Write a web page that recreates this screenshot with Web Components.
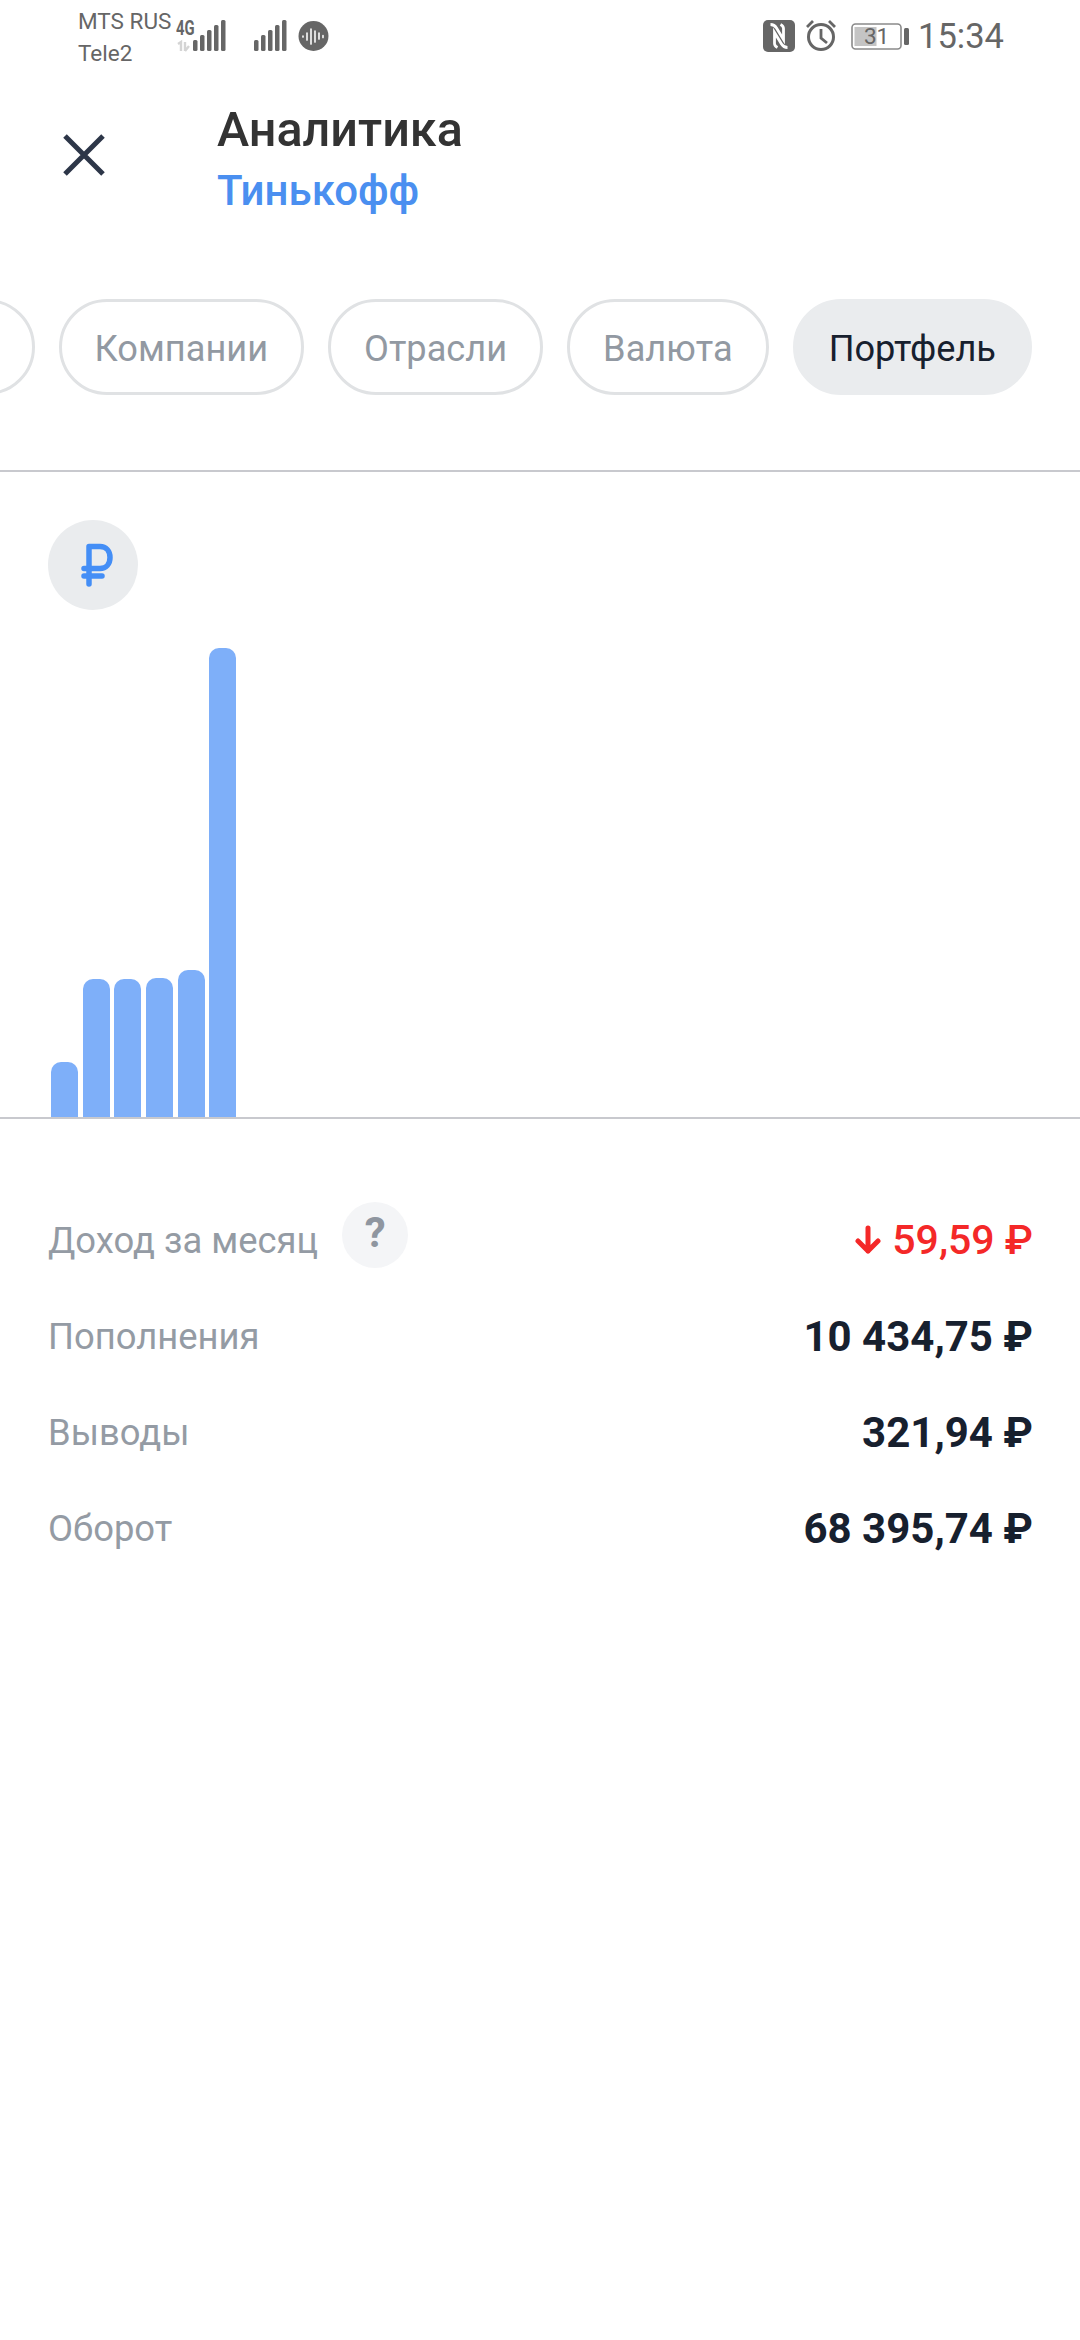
<!DOCTYPE html>
<html lang="ru">
<head>
<meta charset="utf-8">
<title>Аналитика</title>
<style>
    html, body { margin: 0; background: #fff; }
    body { width: 1080px; height: 2340px; overflow: hidden; font-family: Roboto, "Noto Sans", sans-serif; }
</style>
</head>
<body>
<status-bar></status-bar>
<app-header title="Аналитика" subtitle="Тинькофф"></app-header>
<chip-row>
    <filter-chip style="width:150px"></filter-chip>
    <filter-chip>Компании</filter-chip>
    <filter-chip>Отрасли</filter-chip>
    <filter-chip>Валюта</filter-chip>
    <filter-chip active>Портфель</filter-chip>
</chip-row>
<bar-chart values="55,138,138,139,147,469"></bar-chart>
<stat-list>
    <stat-row label="Доход за месяц" help negative>59,59 ₽</stat-row>
    <stat-row label="Пополнения">10 434,75 ₽</stat-row>
    <stat-row label="Выводы">321,94 ₽</stat-row>
    <stat-row label="Оборот">68 395,74 ₽</stat-row>
</stat-list>

<script>
class StatusBar extends HTMLElement {
    constructor() {
        super();
        const bars = (x) => [[0, 11], [7, 16], [14, 21], [21, 26], [28, 31]].map(([dx, h]) =>
            `<rect x="${x + dx}" y="${31 - h}" width="4.5" height="${h}" rx="1.5" fill="#666"/>`).join('');
        const shadowRoot = this.attachShadow({ mode: 'open' });
        shadowRoot.innerHTML = `
            <style>
            :host {
                display: flex;
                justify-content: space-between;
                align-items: flex-start;
                height: 72px;
                padding: 0 76px 0 78px;
                color: #666;
                font-family: Roboto, sans-serif;
            }
            .left, .right { display: flex; }
            .carriers {
                font-size: 22.5px;
                line-height: 32px;
                padding-top: 5px;
                width: 98px;
                white-space: nowrap;
            }
            .net { position: relative; width: 212px; height: 72px; }
            .net svg { display: block; }
            .gen {
                position: absolute;
                left: 0;
                top: 18px;
                font-size: 20px;
                line-height: 20px;
                font-weight: 700;
                transform: scaleX(.74);
                transform-origin: 0 0;
            }
            .right { align-items: center; height: 72px; }
            .right svg { display: block; flex: none; }
            .battery {
                position: relative;
                width: 58px;
                height: 27px;
                margin: 0 9px 0 14px;
            }
            .battery span {
                position: absolute;
                left: 0;
                right: 7px;
                top: 0;
                text-align: center;
                font-size: 22.5px;
                line-height: 27px;
            }
            .time { font-size: 34.5px; line-height: 72px; }
            </style>
            <div class="left">
                <div class="carriers">MTS RUS<br>Tele2</div>
                <div class="net">
                    <span class="gen">4G</span>
                    <svg width="212" height="72" viewBox="0 0 212 72">
                        <g transform="translate(0,20)">
                            <path d="M2 24l3-2v9M9 22v9M13 26l-4 5" fill="none" stroke="#d4d4d4" stroke-width="2.4"/>
                            ${bars(17)}
                            ${bars(78)}
                        </g>
                        <circle cx="137.500" cy="36" r="15" fill="#666"/>
                        <path d="M127 36v1M131 33v7M135 29v15M139 31v11M143 33v6M147 35.500v2" stroke="#f2f2f2" stroke-width="1.700" stroke-linecap="round"/>
                    </svg>
                </div>
            </div>
            <div class="right">
                <svg width="32" height="32" viewBox="0 0 32 32">
                    <rect width="32" height="32" rx="5" fill="#666"/>
                    <path d="M7.500 4.500c3 0 4.500 1 6 3.500l7 11.500V8.500c0-2-1-3-3-4M24.500 27.500c-3 0-4.500-1-6-3.500l-7-11.500v11c0 2 1 3 3 4" fill="none" stroke="#fff" stroke-width="2.800"/>
                </svg>
                <svg style="margin-left:10px;margin-top:-2px" width="32" height="34" viewBox="0 0 32 34">
                    <circle cx="16" cy="19" r="12.500" fill="none" stroke="#666" stroke-width="3"/>
                    <path d="M16 11v9l6 5M2 9l6-6M30 9l-6-6" fill="none" stroke="#666" stroke-width="2.800"/>
                </svg>
                <div class="battery">
                    <svg width="58" height="27" viewBox="0 0 58 27">
                        <rect x="1" y="1" width="49" height="25" rx="3.500" fill="#fff" stroke="#8a8a8a" stroke-width="1.600"/>
                        <rect x="3.500" y="4" width="22" height="19" fill="#c4c4c4"/>
                        <rect x="53" y="5" width="5" height="17" rx="1.500" fill="#666"/>
                    </svg>
                    <span>31</span>
                </div>
                <div class="time">15:34</div>
            </div>
        `;
    }
}

class AppHeader extends HTMLElement {
    constructor() {
        super();
        const shadowRoot = this.attachShadow({ mode: 'open' });
        shadowRoot.innerHTML = `
            <style>
            :host {
                display: flex;
                align-items: flex-start;
                padding: 28px 0 0 62px;
                font-family: Roboto, sans-serif;
                font-weight: 500;
            }
            svg { display: block; flex: none; margin: 33px 111px 0 0; }
            h1, h2 { margin: 0; font-weight: 500; white-space: nowrap; }
            h1 { font-size: 48.5px; line-height: 60px; color: #333; }
            h2 { font-size: 42px; line-height: 62px; color: #4a8ff0; }
            </style>
            <svg width="44" height="44" viewBox="0 0 44 44">
                <path d="M3 3l38 38M41 3L3 41" stroke="#2d3648" stroke-width="5" fill="none"/>
            </svg>
            <div>
                <h1>${this.getAttribute('title')}</h1>
                <h2>${this.getAttribute('subtitle')}</h2>
            </div>
        `;
    }
}

class ChipRow extends HTMLElement {
    constructor() {
        super();
        const shadowRoot = this.attachShadow({ mode: 'open' });
        shadowRoot.innerHTML = `
            <style>
            :host {
                display: flex;
                justify-content: flex-end;
                gap: 24px;
                box-sizing: border-box;
                height: 250px;
                padding: 77px 48px 0 0;
                overflow: hidden;
                border-bottom: 2px solid #c8c9ce;
            }
            </style>
            <slot></slot>
        `;
    }
}

class FilterChip extends HTMLElement {
    constructor() {
        super();
        const shadowRoot = this.attachShadow({ mode: 'open' });
        shadowRoot.innerHTML = `
            <style>
            :host {
                display: block;
                flex: none;
                box-sizing: border-box;
                height: 96px;
                padding: 0 33px;
                border: 3px solid #e0e2e4;
                border-radius: 48px;
                font: 400 36.2px/93px Roboto, sans-serif;
                color: #9299a2;
                white-space: nowrap;
            }
            :host([active]) {
                background: #eaecee;
                border-color: #eaecee;
                color: #17202e;
            }
            </style>
            <slot></slot>
        `;
    }
}

class BarChart extends HTMLElement {
    constructor() {
        super();
        const values = this.getAttribute('values').split(',');
        const shadowRoot = this.attachShadow({ mode: 'open' });
        shadowRoot.innerHTML = `
            <style>
            :host {
                display: block;
                box-sizing: border-box;
                height: 647px;
                padding: 48px 0 0 48px;
                border-bottom: 2px solid #c8c9ce;
            }
            .currency {
                display: flex;
                align-items: center;
                justify-content: center;
                width: 90px;
                height: 90px;
                border-radius: 50%;
                background: #eaecee;
            }
            .currency svg { margin-left: 8px; }
            .bars {
                display: flex;
                align-items: flex-end;
                gap: 4.7px;
                height: 507px;
                padding-left: 3px;
            }
            .bars div {
                width: 27px;
                background: #7eaff9;
                border-radius: 10px 10px 0 0;
            }
            </style>
            <div class="currency">
                <svg width="32" height="44" viewBox="0 0 32 44">
                    <path d="M8 41V3.500h11c6 0 10 4.500 10 11s-4 11-10 11H3M3 33h18" fill="none" stroke="#448ef6" stroke-width="5.500" stroke-linecap="round" stroke-linejoin="round"/>
                </svg>
            </div>
            <div class="bars">
                ${values.map(v => `<div style="height:${v}px"></div>`).join('')}
            </div>
        `;
    }
}

class StatList extends HTMLElement {
    constructor() {
        super();
        const shadowRoot = this.attachShadow({ mode: 'open' });
        shadowRoot.innerHTML = `
            <style>
            :host { display: block; padding: 73px 47px 0 48px; }
            </style>
            <slot></slot>
        `;
    }
}

class StatRow extends HTMLElement {
    constructor() {
        super();
        const help = this.hasAttribute('help') ? '<span class="help">?</span>' : '';
        const arrow = this.hasAttribute('negative') ? `
            <svg width="26" height="30" viewBox="0 0 26 30">
                <path d="M13 3v23M3 16l10 10 10-10" fill="none" stroke="#f42828" stroke-width="5" stroke-linecap="round" stroke-linejoin="round"/>
            </svg>` : '';
        const shadowRoot = this.attachShadow({ mode: 'open' });
        shadowRoot.innerHTML = `
            <style>
            :host {
                display: flex;
                justify-content: space-between;
                align-items: center;
                height: 96px;
                font-family: Roboto, sans-serif;
            }
            .label {
                display: flex;
                align-items: center;
                font-size: 36.4px;
                color: #949ba4;
            }
            .help {
                width: 66px;
                height: 66px;
                margin: -10px 0 0 24px;
                border-radius: 50%;
                background: #f4f5f7;
                font: 700 42px/62px Roboto, sans-serif;
                text-align: center;
                color: #8f96a0;
            }
            .value {
                display: flex;
                align-items: center;
                gap: 10px;
                font-size: 42px;
                font-weight: 700;
                color: #17202e;
                white-space: nowrap;
            }
            :host([negative]) .value { color: #f42828; font-size: 41px; font-weight: 500; gap: 11px; }
            </style>
            <div class="label">${this.getAttribute('label')}${help}</div>
            <div class="value">${arrow}<slot></slot></div>
        `;
    }
}

customElements.define('status-bar', StatusBar);
customElements.define('app-header', AppHeader);
customElements.define('chip-row', ChipRow);
customElements.define('filter-chip', FilterChip);
customElements.define('bar-chart', BarChart);
customElements.define('stat-list', StatList);
customElements.define('stat-row', StatRow);
</script>
</body>
</html>
